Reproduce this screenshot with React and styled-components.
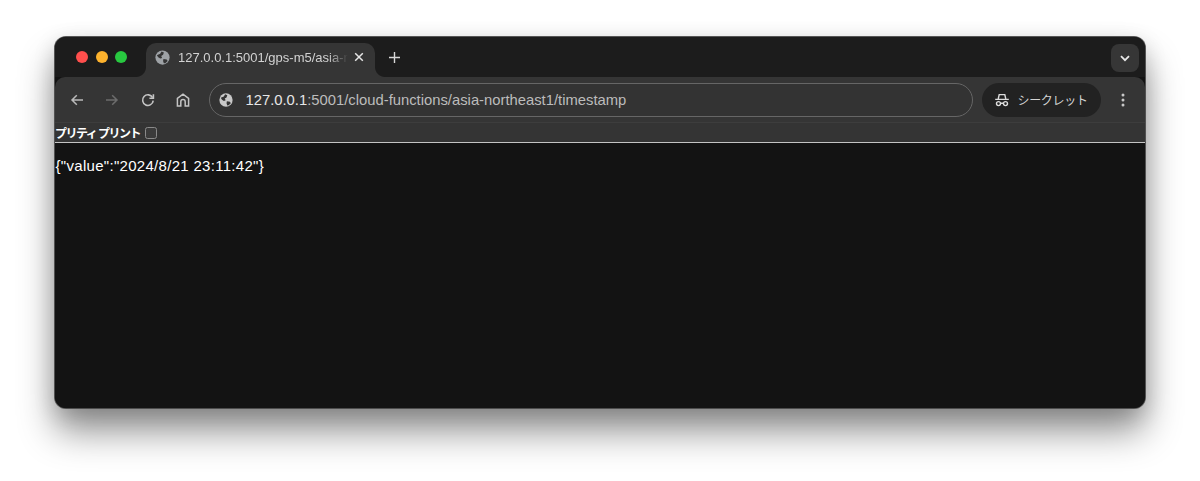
import React from "react";
import styled, { createGlobalStyle } from "styled-components";

const GlobalStyle = createGlobalStyle`
  html, body { margin: 0; padding: 0; background: #fff; }
  body { font-family: "Liberation Sans", "Noto Sans CJK JP", sans-serif; overflow: hidden; }
`;

const Page = styled.div`
  width: 1200px;
  height: 481px;
  box-sizing: border-box;
  padding: 37px 55px 0;
`;

const BrowserWindow = styled.div`
  height: 371px;
  display: flex;
  flex-direction: column;
  border-radius: 11px;
  overflow: hidden;
  background: #131313;
  box-shadow: 0 0 0 1px rgba(70, 70, 70, 0.9), 0 24px 36px rgba(0, 0, 0, 0.42), 0 6px 22px rgba(0, 0, 0, 0.16);
`;

const TabStrip = styled.div`
  height: 40px;
  display: flex;
  align-items: flex-end;
  background: #1c1c1c;
  padding-left: 21px;
  position: relative;
`;

const Lights = styled.div`
  display: flex;
  gap: 7.5px;
  align-self: flex-start;
  margin-top: 14px;
  width: 70px;
`;

const Light = styled.span`
  width: 12px;
  height: 12px;
  border-radius: 50%;
  background: ${(p) => p.$color};
`;

const Tab = styled.div`
  width: 229px;
  height: 34px;
  box-sizing: border-box;
  display: flex;
  align-items: center;
  padding: 0 11px 6px 9px;
  background: #353535;
  border-radius: 10px 10px 0 0;
  position: relative;
  color: #d2d2d2;
  font-size: 13px;

  &::before, &::after {
    content: "";
    position: absolute;
    bottom: 0;
    width: 10px;
    height: 10px;
  }
  &::before {
    left: -10px;
    background: radial-gradient(circle at 0 0, #1c1c1c 9.5px, #353535 10.5px);
  }
  &::after {
    right: -10px;
    background: radial-gradient(circle at 100% 0, #1c1c1c 9.5px, #353535 10.5px);
  }
`;

const TabTitle = styled.span`
  margin-left: 8px;
  width: 170px;
  white-space: nowrap;
  overflow: hidden;
  -webkit-mask-image: linear-gradient(to right, #000 150px, transparent 170px);
  mask-image: linear-gradient(to right, #000 150px, transparent 170px);
`;

const TabClose = styled.svg`
  margin-left: 6px;
  flex: none;
`;

const NewTab = styled.svg`
  margin: 0 0 0 14px;
  position: relative;
  top: -14px;
`;

const TabSearch = styled.div`
  position: absolute;
  right: 6px;
  top: 7px;
  width: 28px;
  height: 28px;
  border-radius: 8px;
  background: #363636;
  display: flex;
  align-items: center;
  justify-content: center;
`;

const Toolbar = styled.div`
  height: 46px;
  box-sizing: border-box;
  display: flex;
  align-items: center;
  background: #353535;
  border-bottom: 1px solid #3d3d3d;
  border-radius: 10px 10px 0 0;
  padding: 0 0 0 13px;
  position: relative;
`;

const NavIcon = styled.svg`
  width: 18px;
  height: 18px;
  margin-right: 17.4px;
  flex: none;
`;

const AddressBar = styled.div`
  width: 764px;
  height: 34px;
  box-sizing: border-box;
  margin-left: -0.1px;
  display: flex;
  align-items: center;
  padding-left: 9px;
  border: 1px solid #666666;
  border-radius: 17px;
  background: #333333;
  font-size: 14.8px;
  color: #bcbcbc;
`;

const Host = styled.span`
  color: #e6e6e6;
`;

const Url = styled.div`
  margin-left: 12px;
`;

const IncognitoPill = styled.div`
  width: 119px;
  height: 34px;
  box-sizing: border-box;
  margin-left: 9px;
  display: flex;
  align-items: center;
  gap: 7px;
  padding-left: 12px;
  border-radius: 17px;
  background: #222222;
  color: #d4d4d4;
  font-size: 12px;
  white-space: nowrap;
  letter-spacing: -0.3px;
`;

const MenuDots = styled.svg`
  margin-left: 20px;
`;

const PrintBar = styled.div`
  height: 19px;
  box-sizing: border-box;
  display: flex;
  align-items: center;
  background: #343434;
  color: #fff;
  font-size: 12px;
  font-weight: 700;
  white-space: pre;
  letter-spacing: -1.5px;
`;

const Check = styled.span`
  width: 12px;
  height: 12px;
  box-sizing: border-box;
  margin-left: 5px;
  border: 1px solid #8a8a8a;
  border-radius: 2.5px;
  background: #3b3b3b;
`;

const Rule = styled.div`
  height: 1px;
  background: #c4c4c4;
  flex: none;
`;

const Body = styled.pre`
  margin: 0;
  flex: 1;
  padding: 14px 0 0 0.5px;
  background: #131313;
  color: #fff;
  font-family: "Liberation Sans", sans-serif;
  font-size: 15px;
  line-height: 17px;
  letter-spacing: 0.3px;
`;

function Globe({ size = 14, fill = "#c4c7ca", bg = "#353535" }) {
  return (
    <svg width={size} height={size} viewBox="0 0 16 16" style={{ flex: "none" }}>
      <circle cx="8" cy="8" r="7.6" fill={fill} />
      <path d="M2 5.5 5.5 4 7 1.5 9.5 2.6 8.6 5 6.6 6.4 7.6 8.4 5.6 9 3.4 7.6ZM9 9.5l3.5.5L13.5 11.6 11 14 9.4 14.2 8.6 11.6Z" fill={bg} />
    </svg>
  );
}

export default function App() {
  return (
    <>
      <GlobalStyle />
      <Page>
        <BrowserWindow>
          <TabStrip>
            <Lights>
              <Light $color="#ff4f4d" />
              <Light $color="#fdb22d" />
              <Light $color="#28c840" />
            </Lights>
            <Tab>
              <Globe size={15} fill="#9ea2a6" />
              <TabTitle>127.0.0.1:5001/gps-m5/asia-northeast1</TabTitle>
              <TabClose width="10" height="10" viewBox="0 0 10 10">
                <path d="M1.2 1.2l7.6 7.6M8.8 1.2 1.2 8.8" stroke="#e6e6e6" strokeWidth="1.5" />
              </TabClose>
            </Tab>
            <NewTab width="11" height="11" viewBox="0 0 11 11">
              <path d="M5.5 0v11M0 5.5h11" stroke="#d8d8d8" strokeWidth="1.4" />
            </NewTab>
            <TabSearch>
              <svg width="10" height="7" viewBox="0 0 10 7">
                <path d="M1 1.2 5 5.2 9 1.2" fill="none" stroke="#e8e8e8" strokeWidth="1.8" />
              </svg>
            </TabSearch>
          </TabStrip>
          <Toolbar>
            <NavIcon viewBox="0 0 18 18" fill="none" stroke="#b9b9b9" strokeWidth="1.5">
              <path d="M15 9H4M8.8 4.2 4 9l4.8 4.8" />
            </NavIcon>
            <NavIcon viewBox="0 0 18 18" fill="none" stroke="#6c6c6c" strokeWidth="1.5">
              <path d="M3 9h11M9.2 4.2 14 9l-4.8 4.8" />
            </NavIcon>
            <NavIcon viewBox="0 0 18 18" fill="none" stroke="#c4c4c4" strokeWidth="1.6">
              <path d="M13.6 6.6A5.3 5.3 0 1 0 14.2 9.6" />
              <path d="M14.4 3.2v4h-4" />
            </NavIcon>
            <NavIcon viewBox="0 0 18 18" fill="none" stroke="#c4c4c4" strokeWidth="1.5">
              <path d="M3.4 15V7.3L9 3.2l5.6 4.1V15h-3.4v-4.2a2.2 2.2 0 0 0-4.4 0V15Z" />
            </NavIcon>
            <AddressBar>
              <Globe size={14} fill="#c8c8c8" bg="#333333" />
              <Url><Host>127.0.0.1</Host>:5001/cloud-functions/asia-northeast1/timestamp</Url>
            </AddressBar>
            <IncognitoPill>
              <svg width="16" height="16" viewBox="0 0 16 16" fill="none" stroke="#dcdcdc" strokeWidth="1.4" style={{ flex: "none" }}>
                <path d="M4.2 7 5.2 2.6h5.6L11.8 7" />
                <path d="M1.2 7.4h13.6" />
                <circle cx="4.5" cy="11.6" r="2" />
                <circle cx="11.5" cy="11.6" r="2" />
                <path d="M6.5 11.2h3" />
              </svg>
              シークレット
            </IncognitoPill>
            <MenuDots width="4" height="14" viewBox="0 0 4 14" fill="#c8c8c8">
              <circle cx="2" cy="2" r="1.5" />
              <circle cx="2" cy="7" r="1.5" />
              <circle cx="2" cy="12" r="1.5" />
            </MenuDots>
          </Toolbar>
          <PrintBar>
            プリティ プリント
            <Check />
          </PrintBar>
          <Rule />
          <Body>{'{"value":"2024/8/21 23:11:42"}'}</Body>
        </BrowserWindow>
      </Page>
    </>
  );
}
